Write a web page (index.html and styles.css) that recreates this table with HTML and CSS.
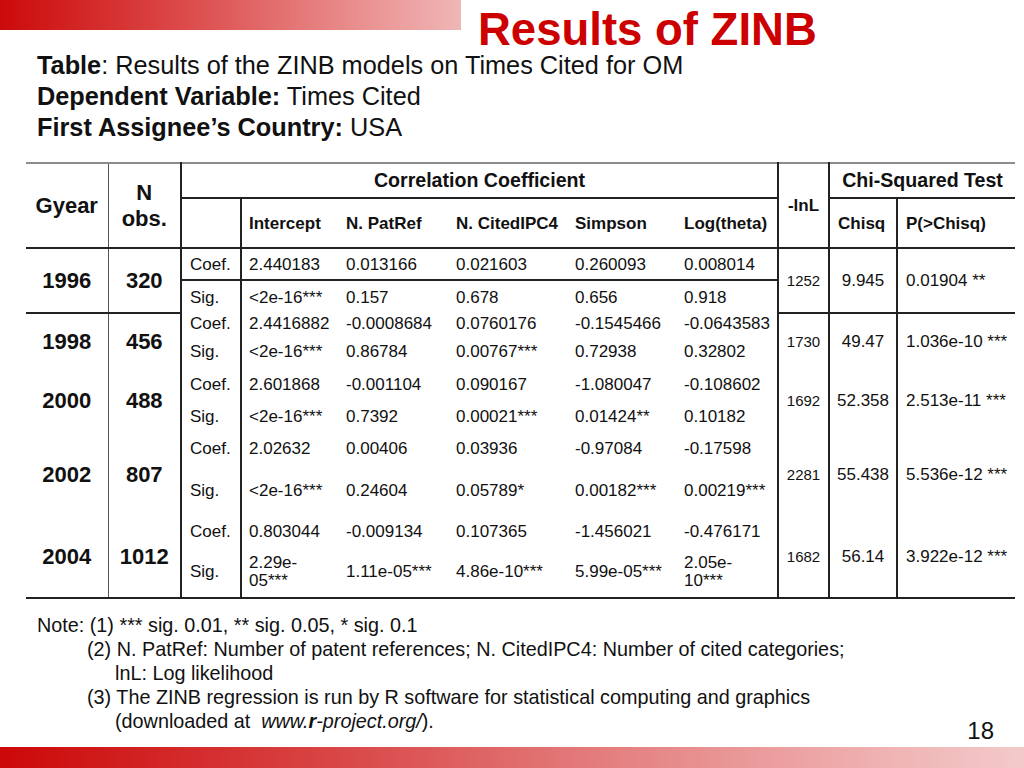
FILE: index.html
```html
<!DOCTYPE html>
<html lang="en">
<head>
<meta charset="utf-8">
<title>Results of ZINB</title>
<link rel="stylesheet" href="styles.css">
</head>
<body>
<div class="slide">
  <header class="head">
    <div class="topbar"></div>
    <h1 class="title">Results of ZINB</h1>
  </header>

  <div class="info">
    <div><b>Table</b>: Results of the ZINB models on Times Cited for OM</div>
    <div><b>Dependent Variable:</b> Times Cited</div>
    <div><b>First Assignee’s Country:</b> USA</div>
  </div>

  <table class="res">
    <colgroup>
      <col class="c-year"><col class="c-n"><col class="c-lab"><col class="c-int"><col class="c-pat"><col class="c-cit"><col class="c-sim"><col class="c-log"><col class="c-lnl"><col class="c-chi"><col class="c-p">
    </colgroup>
    <thead>
      <tr class="h1">
        <th rowspan="2" class="year bl">Gyear</th>
        <th rowspan="2" class="n br nobs">N<br>obs.</th>
        <th colspan="6" class="grp bb br">Correlation Coefficient</th>
        <th rowspan="2" class="lnlh br">-lnL</th>
        <th colspan="2" class="grp bb">Chi-Squared Test</th>
      </tr>
      <tr class="h2">
        <th class="br"></th>
        <th class="sub">Intercept</th>
        <th class="sub">N. PatRef</th>
        <th class="sub">N. CitedIPC4</th>
        <th class="sub">Simpson</th>
        <th class="sub br">Log(theta)</th>
        <th class="sub br pl8">Chisq</th>
        <th class="sub pl8">P(&gt;Chisq)</th>
      </tr>
    </thead>
    <tbody>
      <tr style="height:32px" class="rb">
        <td rowspan="2" class="year bl bb">1996</td>
        <td rowspan="2" class="n br bb">320</td>
        <td class="lab br">Coef.</td>
        <td>2.440183</td><td>0.013166</td><td>0.021603</td><td>0.260093</td><td class="br">0.008014</td>
        <td rowspan="2" class="lnl br bb">1252</td>
        <td rowspan="2" class="chi br bb">9.945</td>
        <td rowspan="2" class="p bb">0.01904 **</td>
      </tr>
      <tr style="height:33px">
        <td class="lab br">Sig.</td>
        <td>&lt;2e-16***</td><td>0.157</td><td>0.678</td><td>0.656</td><td class="br">0.918</td>
      </tr>

      <tr style="height:21px">
        <td rowspan="2" class="year bl">1998</td>
        <td rowspan="2" class="n br">456</td>
        <td class="lab br">Coef.</td>
        <td>2.4416882</td><td>-0.0008684</td><td>0.0760176</td><td>-0.1545466</td><td class="br">-0.0643583</td>
        <td rowspan="2" class="lnl br">1730</td>
        <td rowspan="2" class="chi br">49.47</td>
        <td rowspan="2" class="p">1.036e-10 ***</td>
      </tr>
      <tr style="height:34px">
        <td class="lab br">Sig.</td>
        <td>&lt;2e-16***</td><td>0.86784</td><td>0.00767***</td><td>0.72938</td><td class="br">0.32802</td>
      </tr>

      <tr style="height:32px">
        <td rowspan="2" class="year bl">2000</td>
        <td rowspan="2" class="n br">488</td>
        <td class="lab br">Coef.</td>
        <td>2.601868</td><td>-0.001104</td><td>0.090167</td><td>-1.080047</td><td class="br">-0.108602</td>
        <td rowspan="2" class="lnl br">1692</td>
        <td rowspan="2" class="chi br">52.358</td>
        <td rowspan="2" class="p">2.513e-11 ***</td>
      </tr>
      <tr style="height:32px">
        <td class="lab br">Sig.</td>
        <td>&lt;2e-16***</td><td>0.7392</td><td>0.00021***</td><td>0.01424**</td><td class="br">0.10182</td>
      </tr>

      <tr style="height:33px">
        <td rowspan="2" class="year bl">2002</td>
        <td rowspan="2" class="n br">807</td>
        <td class="lab br">Coef.</td>
        <td>2.02632</td><td>0.00406</td><td>0.03936</td><td>-0.97084</td><td class="br">-0.17598</td>
        <td rowspan="2" class="lnl br">2281</td>
        <td rowspan="2" class="chi br">55.438</td>
        <td rowspan="2" class="p">5.536e-12 ***</td>
      </tr>
      <tr style="height:51px">
        <td class="lab br">Sig.</td>
        <td>&lt;2e-16***</td><td>0.24604</td><td>0.05789*</td><td>0.00182***</td><td class="br">0.00219***</td>
      </tr>

      <tr style="height:30px">
        <td rowspan="2" class="year bl">2004</td>
        <td rowspan="2" class="n br">1012</td>
        <td class="lab br">Coef.</td>
        <td>0.803044</td><td>-0.009134</td><td>0.107365</td><td>-1.456021</td><td class="br">-0.476171</td>
        <td rowspan="2" class="lnl br">1682</td>
        <td rowspan="2" class="chi br">56.14</td>
        <td rowspan="2" class="p">3.922e-12 ***</td>
      </tr>
      <tr style="height:52px">
        <td class="lab br">Sig.</td>
        <td class="two">2.29e-<br>05***</td><td>1.11e-05***</td><td>4.86e-10***</td><td>5.99e-05***</td><td class="two br">2.05e-<br>10***</td>
      </tr>
    </tbody>
  </table>

  <footer class="foot">
    <div class="notes">
      <div>Note: (1) *** sig. 0.01, ** sig. 0.05, * sig. 0.1</div>
      <div class="ind1">(2) N. PatRef: Number of patent references; N. CitedIPC4: Number of cited categories;</div>
      <div class="ind2">lnL: Log likelihood</div>
      <div class="ind1">(3) The ZINB regression is run by R software for statistical computing and graphics</div>
      <div class="ind2">(downloaded at &nbsp;<i>www.<b>r</b>-project.org/</i>).</div>
    </div>
    <div class="pagenum">18</div>
  </footer>

  <div class="bottombar"></div>
</div>
</body>
</html>
```

FILE: styles.css
```css
* { box-sizing: border-box; }

html, body {
  margin: 0;
  padding: 0;
  background: #ffffff;
}

body {
  font-family: "Liberation Sans", Arial, sans-serif;
  color: #111111;
}

.slide {
  width: 1024px;
  height: 768px;
  display: flex;
  flex-direction: column;
  overflow: hidden;
}

/* header */
.head {
  display: flex;
  align-items: flex-start;
  height: 50px;
}

.topbar {
  width: 461px;
  height: 30px;
  background: linear-gradient(to right, #cc0a0a 0%, #dc4a4a 40%, #e88a8a 75%, #f0b6b6 100%);
  flex: none;
}

.title {
  margin: 10px 0 0 17px;
  font-size: 45.5px;
  line-height: 40px;
  font-weight: bold;
  color: #cc0000;
  white-space: nowrap;
}

/* info lines */
.info {
  padding-left: 37px;
  font-size: 25.3px;
  line-height: 31px;
  height: 93px;
  margin-top: -0.5px;
}

/* table */
.res {
  margin: 19.5px 0 0 26px;
  width: 989px;
  border-collapse: collapse;
  table-layout: fixed;
  font-size: 17px;
}

.c-year { width: 82px; }
.c-n { width: 73px; }
.c-lab { width: 60px; }
.c-int { width: 98px; }
.c-pat { width: 110px; }
.c-cit { width: 119px; }
.c-sim { width: 109px; }
.c-log { width: 101px; }
.c-lnl { width: 51px; }
.c-chi { width: 68px; }
.c-p { width: 118px; }

.res th, .res td {
  padding: 0 0 0 7px;
  text-align: left;
  vertical-align: middle;
  white-space: nowrap;
  line-height: 19px;
}

.res thead tr.h1 { height: 35px; }
.res thead tr.h2 { height: 50px; }

.res thead tr.h1 th { border-top: 2px solid #8c8c8c; }
.res thead tr.h2 th { border-bottom: 2px solid #222; }
.res thead tr.h1 th.year,
.res thead tr.h1 th.n,
.res thead tr.h1 th.lnlh { border-bottom: 2px solid #222; }

.res th.grp {
  font-size: 19.6px;
  text-align: center;
  padding: 0;
}

.res th.sub { font-size: 17px; }
.res th.pl8 { padding-left: 8px; }

.res .year {
  font-size: 22px;
  font-weight: bold;
  text-align: center;
  padding: 0;
  border-right: 1px solid #555;
}

.res .n {
  font-size: 22px;
  font-weight: bold;
  text-align: center;
  padding: 0;
}

.res th.nobs { line-height: 26px; }

.res th.lnlh {
  text-align: center;
  padding: 0;
}

.res td.lab { padding-left: 8px; }

.res td.lnl {
  font-size: 15px;
  text-align: center;
  padding: 0;
}

.res td.chi {
  text-align: center;
  padding: 0;
}

.res td.p { padding-left: 8px; }

.res td.two { line-height: 18px; }

.res .br { border-right: 2px solid #222; }
.res .bb { border-bottom: 2px solid #222; }

.res tbody tr.rb td { border-bottom: 2px solid #222; }
.res tbody tr:nth-last-child(2) td[rowspan] { border-bottom: 2px solid #222; }
.res tbody tr:last-child td { border-bottom: 2px solid #222; }

/* footer */
.foot {
  display: flex;
  margin-top: 14px;
  height: 135px;
}

.notes {
  flex: 1;
  padding-left: 37px;
  font-size: 19.8px;
  line-height: 24px;
}

.notes .ind1 { padding-left: 50px; }
.notes .ind2 { padding-left: 78px; }

.pagenum {
  align-self: flex-end;
  margin: 0 30px 4px 0;
  font-size: 24px;
  line-height: 24px;
}

.bottombar {
  height: 21px;
  margin-top: auto;
  background: linear-gradient(to right, #cc0808 0%, #d84040 30%, #e48080 60%, #efb0b0 85%, #f3caca 100%);
}
```
